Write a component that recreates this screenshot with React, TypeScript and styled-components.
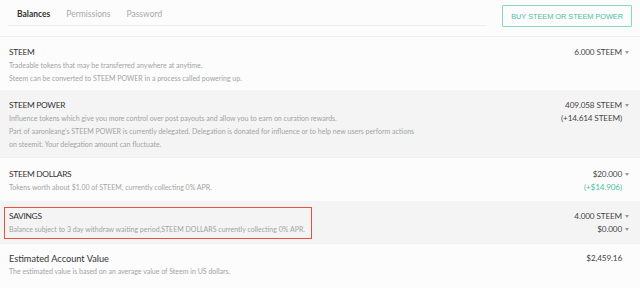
import React from "react";
import styled, { createGlobalStyle } from "styled-components";

const Global = createGlobalStyle`
  html, body { margin: 0; padding: 0; background: #fcfcfc; }
  body { font-family: Lato, "Noto Sans", sans-serif; }
`;

const Page = styled.div`
  width: 640px;
  height: 288px;
  overflow: hidden;
  background: #fcfcfc;
  color: #333;
`;

const Header = styled.div`
  display: flex;
  align-items: flex-start;
  padding: 5px 8px 0 8px;
`;

const Tabs = styled.div`
  flex: 1;
  display: flex;
  gap: 16px;
  padding: 4px 0 5px 9px;
  border-bottom: 1px solid #eeeeee;
  margin-right: 16px;
`;

const Tab = styled.span<{ $active?: boolean }>`
  font-size: 8.5px;
  line-height: 11px;
  color: ${(p) => (p.$active ? "#333" : "#a9a9a9")};
  font-weight: ${(p) => (p.$active ? 700 : 400)};
`;

const BuyButton = styled.button`
  height: 22px;
  padding: 0 8px;
  background: transparent;
  border: 1px solid #8ad8c0;
  border-radius: 1px;
  color: #4fbf9c;
  font-family: "Liberation Sans", Arial, sans-serif;
  font-size: 7.3px;
  letter-spacing: 0;
  text-transform: uppercase;
`;

const List = styled.div`
  display: flex;
  flex-direction: column;
  margin-top: 9px;
`;

const Row = styled.div<{ $shade?: boolean; $pad: string }>`
  display: flex;
  justify-content: space-between;
  align-items: flex-start;
  padding: ${(p) => p.$pad};
  background: ${(p) => (p.$shade ? "#f4f4f4" : "transparent")};
  border-top: 1px solid ${(p) => (p.$shade ? "#f4f4f4" : "#f0f0f0")};
`;

const Info = styled.div<{ $boxed?: boolean }>`
  display: flex;
  flex-direction: column;
  padding: ${(p) => (p.$boxed ? "2px 6px 2px 4px" : "0 0 0 9px")};
  margin-left: ${(p) => (p.$boxed ? "4px" : "0")};
  border: ${(p) => (p.$boxed ? "1.5px solid #e5533f" : "none")};
`;

const Title = styled.div<{ $caps?: boolean }>`
  font-size: ${(p) => (p.$caps ? "8.4px" : "9.2px")};
  letter-spacing: ${(p) => (p.$caps ? "-0.3px" : "0")};
  line-height: 13px;
  color: #333;
`;

const Desc = styled.div`
  font-size: 7px;
  line-height: 13px;
  color: #a3a3a3;
`;

const Values = styled.div<{ $offset?: number }>`
  display: flex;
  flex-direction: column;
  align-items: flex-end;
  padding-right: 11px;
  margin-top: ${(p) => p.$offset ?? 0}px;
`;

const Value = styled.div<{ $green?: boolean; $caret?: boolean }>`
  display: flex;
  align-items: center;
  font-size: 8.2px;
  letter-spacing: -0.15px;
  line-height: 13px;
  color: ${(p) => (p.$green ? "#4fbf9c" : "#444")};
  padding-right: ${(p) => (p.$caret ? "0" : "7px")};
`;

const Caret = styled.span`
  display: inline-block;
  width: 0;
  height: 0;
  margin-left: 3px;
  border-left: 2.5px solid transparent;
  border-right: 2.5px solid transparent;
  border-top: 3px solid #999;
`;

export default function App() {
  return (
    <Page>
      <Global />
      <Header>
        <Tabs>
          <Tab $active>Balances</Tab>
          <Tab>Permissions</Tab>
          <Tab>Password</Tab>
        </Tabs>
        <BuyButton>Buy Steem or Steem Power</BuyButton>
      </Header>
      <List>
        <Row $pad="9px 0 5px 0">
          <Info>
            <Title $caps>STEEM</Title>
            <Desc>Tradeable tokens that may be transferred anywhere at anytime.</Desc>
            <Desc>Steem can be converted to STEEM POWER in a process called powering up.</Desc>
          </Info>
          <Values>
            <Value $caret>6.000 STEEM<Caret /></Value>
          </Values>
        </Row>
        <Row $shade $pad="8px 0 6px 0">
          <Info>
            <Title $caps>STEEM POWER</Title>
            <Desc>Influence tokens which give you more control over post payouts and allow you to earn on curation rewards.</Desc>
            <Desc>Part of aaronleang's STEEM POWER is currently delegated. Delegation is donated for influence or to help new users perform actions</Desc>
            <Desc>on steemit. Your delegation amount can fluctuate.</Desc>
          </Info>
          <Values>
            <Value $caret>409.058 STEEM<Caret /></Value>
            <Value>(+14.614 STEEM)</Value>
          </Values>
        </Row>
        <Row $pad="10px 0 7px 0">
          <Info>
            <Title $caps>STEEM DOLLARS</Title>
            <Desc>Tokens worth about $1.00 of STEEM, currently collecting 0% APR.</Desc>
          </Info>
          <Values>
            <Value $caret>$20.000<Caret /></Value>
            <Value $green>(+$14.906)</Value>
          </Values>
        </Row>
        <Row $shade $pad="5px 0 4px 0">
          <Info $boxed>
            <Title $caps>SAVINGS</Title>
            <Desc>Balance subject to 3 day withdraw waiting period,STEEM DOLLARS currently collecting 0% APR.</Desc>
          </Info>
          <Values $offset={3}>
            <Value $caret>4.000 STEEM<Caret /></Value>
            <Value $caret>$0.000<Caret /></Value>
          </Values>
        </Row>
        <Row $pad="8px 0 8px 0">
          <Info>
            <Title>Estimated Account Value</Title>
            <Desc>The estimated value is based on an average value of Steem in US dollars.</Desc>
          </Info>
          <Values>
            <Value>$2,459.16</Value>
          </Values>
        </Row>
      </List>
    </Page>
  );
}
